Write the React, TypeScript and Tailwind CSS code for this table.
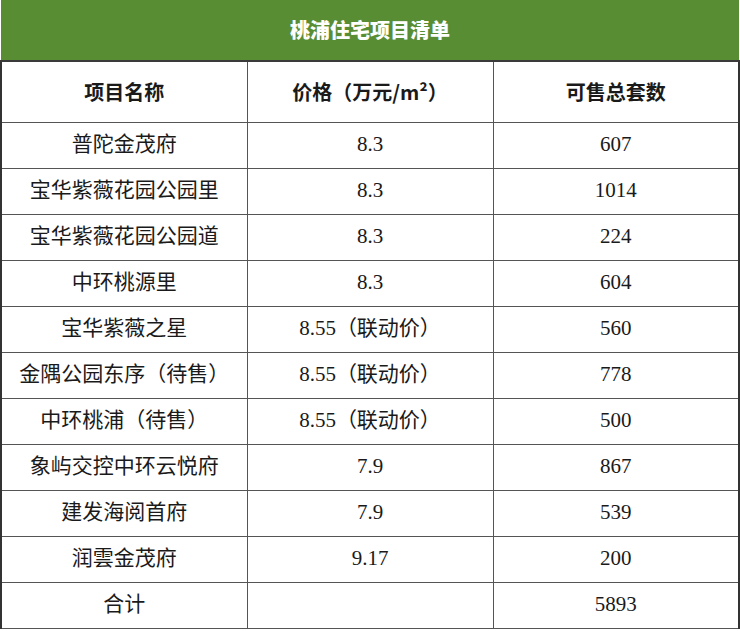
const rows: [string, string, string][] = [
  ["普陀金茂府", "8.3", "607"],
  ["宝华紫薇花园公园里", "8.3", "1014"],
  ["宝华紫薇花园公园道", "8.3", "224"],
  ["中环桃源里", "8.3", "604"],
  ["宝华紫薇之星", "8.55（联动价）", "560"],
  ["金隅公园东序（待售）", "8.55（联动价）", "778"],
  ["中环桃浦（待售）", "8.55（联动价）", "500"],
  ["象屿交控中环云悦府", "7.9", "867"],
  ["建发海阅首府", "7.9", "539"],
  ["润雲金茂府", "9.17", "200"],
  ["合计", "", "5893"],
];

const serif = "font-['Liberation_Serif','Noto_Sans_CJK_SC',serif]";
const bold = "font-['Noto_Sans_CJK_SC',sans-serif]";

export default function App() {
  return (
    <div className="w-[740px] h-[631px] bg-white overflow-hidden">
      <table className="w-full border-collapse table-fixed text-[#1a1a1a]">
        <thead>
          <tr>
            <th
              colSpan={3}
              className={`h-[61px] bg-[#588d33] text-white text-[20px] font-black ${bold} border-b-2 border-[#3a3a3a]`}
            >
              桃浦住宅项目清单
            </th>
          </tr>
          <tr className={`h-[61px] text-[20px] font-black ${bold}`}>
            <th className="border-[1.5px] border-[#555] border-l-2 border-l-[#333]">项目名称</th>
            <th className="border-[1.5px] border-[#555]">价格（万元/m²）</th>
            <th className="border-[1.5px] border-[#555] border-r-2 border-r-[#333]">可售总套数</th>
          </tr>
        </thead>
        <tbody className={`text-[21px] ${serif}`}>
          {rows.map((r, i) => (
            <tr key={i} className="h-[46px]">
              <td className="text-center border-[1.5px] border-[#555] border-l-2 border-l-[#333]">{r[0]}</td>
              <td className="text-center border-[1.5px] border-[#555]">{r[1]}</td>
              <td className="text-center border-[1.5px] border-[#555] border-r-2 border-r-[#333]">{r[2]}</td>
            </tr>
          ))}
        </tbody>
      </table>
    </div>
  );
}
